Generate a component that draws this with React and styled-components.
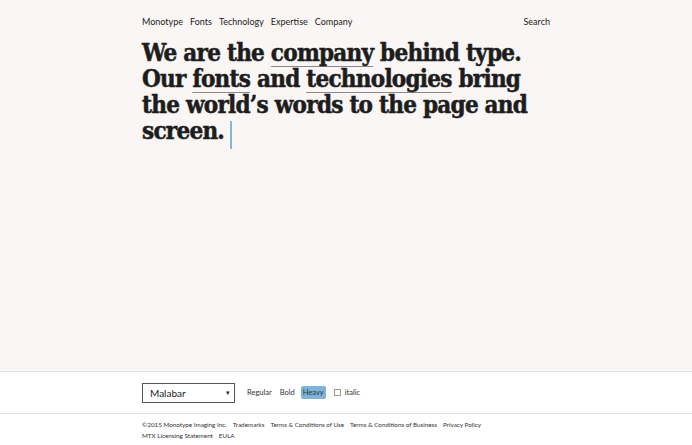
import React from "react";
import styled, { createGlobalStyle } from "styled-components";

const Global = createGlobalStyle`
  html, body {
    margin: 0;
    padding: 0;
    background: #faf6f5;
  }
  body {
    font-family: Lato, "Open Sans", "Liberation Sans", sans-serif;
    color: #1b1b1b;
  }
`;

const App = () => {
  return (
    <Page>
      <Global />
      <Top>
        <Nav>
          <NavLinks>
            <NavItem>Monotype</NavItem>
            <NavItem>Fonts</NavItem>
            <NavItem>Technology</NavItem>
            <NavItem>Expertise</NavItem>
            <NavItem>Company</NavItem>
          </NavLinks>
          <NavItem>Search</NavItem>
        </Nav>
        <Headline>
          <Line>
            We are the <U>company</U> behind type.
          </Line>
          <Line>
            Our <U>fonts</U> and <U>technologies</U> bring
          </Line>
          <Line>the world’s words to the page and</Line>
          <Line>
            screen.
            <Caret />
          </Line>
        </Headline>
      </Top>
      <Toolbar>
        <Inner>
          <Select>
            <span>Malabar</span>
            <Arrow>▾</Arrow>
          </Select>
          <Weights>
            <Weight>Regular</Weight>
            <Weight>Bold</Weight>
            <Weight active>Heavy</Weight>
            <Check>
              <Box />
              italic
            </Check>
          </Weights>
        </Inner>
      </Toolbar>
      <Footer>
        <FootInner>
          <FootRow>
            <span>©2015 Monotype Imaging Inc.</span>
            <span>Trademarks</span>
            <span>Terms &amp; Conditions of Use</span>
            <span>Terms &amp; Conditions of Business</span>
            <span>Privacy Policy</span>
          </FootRow>
          <FootRow>
            <span>MTX Licensing Statement</span>
            <span>EULA</span>
          </FootRow>
        </FootInner>
      </Footer>
    </Page>
  );
};
export default App;

const Page = styled.div`
  width: 692px;
  height: 445px;
  display: flex;
  flex-direction: column;
  overflow: hidden;
`;
const Top = styled.div`
  height: 371px;
  padding: 0 142px;
  box-sizing: border-box;
`;
const Nav = styled.div`
  display: flex;
  justify-content: space-between;
  align-items: center;
  height: 20px;
  margin-top: 11px;
`;
const NavLinks = styled.div`
  display: flex;
  gap: 7px;
`;
const NavItem = styled.div`
  font-size: 9px;
  color: #222;
`;
const Headline = styled.h1`
  margin: 9px 0 0;
  font-family: "DejaVu Serif Condensed", "DejaVu Serif", serif;
  font-weight: 900;
  font-size: 24px;
  line-height: 26px;
  letter-spacing: -0.75px;
  -webkit-text-stroke: 0.5px #1d1d1d;
  color: #1d1d1d;
  white-space: nowrap;
`;
const Line = styled.div`
  height: 26px;
`;
const U = styled.span`
  text-decoration: underline;
  text-decoration-thickness: 1px;
  text-decoration-color: #8a8a8a;
  text-underline-offset: 5px;
`;
const Caret = styled.span`
  display: inline-block;
  width: 2px;
  height: 28px;
  margin-left: 6px;
  vertical-align: -10px;
  background: #86b5d8;
  -webkit-text-stroke: 0;
`;
const Toolbar = styled.div`
  height: 41px;
  background: #fff;
  border-top: 1px solid #e2e2e2;
  border-bottom: 1px solid #e2e2e2;
  display: flex;
  align-items: center;
`;
const Inner = styled.div`
  display: flex;
  align-items: center;
  padding-left: 142px;
  gap: 10px;
`;
const Select = styled.div`
  width: 93px;
  height: 20px;
  box-sizing: border-box;
  border: 1px solid #555;
  display: flex;
  align-items: center;
  justify-content: space-between;
  padding: 0 4px 0 7px;
  font-size: 10px;
  color: #222;
  background: #fff;
`;
const Arrow = styled.span`
  font-size: 7px;
`;
const Weights = styled.div`
  display: flex;
  align-items: center;
  gap: 4px;
`;
const Weight = styled.div`
  font-size: 7.5px;
  padding: 2px 2px;
  border-radius: 2px;
  color: #333;
  background: ${(p) => (p.active ? "#7eb4da" : "transparent")};
`;
const Check = styled.div`
  display: flex;
  align-items: center;
  gap: 4px;
  font-size: 7.5px;
  color: #333;
  margin-left: 4px;
`;
const Box = styled.span`
  width: 5px;
  height: 5px;
  border: 1px solid #999;
  background: #fff;
`;
const Footer = styled.div`
  flex: 1;
  background: #fff;
`;
const FootInner = styled.div`
  padding: 5px 0 0 142px;
`;
const FootRow = styled.div`
  display: flex;
  gap: 6px;
  font-size: 6.3px;
  line-height: 11px;
  color: #333;
`;
